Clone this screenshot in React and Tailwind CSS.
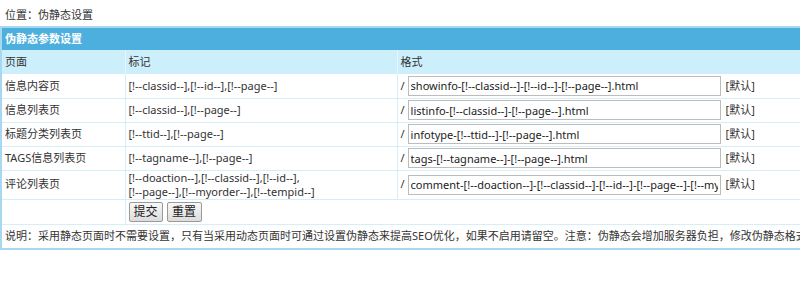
import React from "react";

const rows = [
  { page: "信息内容页", mark: "[!--classid--],[!--id--],[!--page--]", fmt: "showinfo-[!--classid--]-[!--id--]-[!--page--].html" },
  { page: "信息列表页", mark: "[!--classid--],[!--page--]", fmt: "listinfo-[!--classid--]-[!--page--].html" },
  { page: "标题分类列表页", mark: "[!--ttid--],[!--page--]", fmt: "infotype-[!--ttid--]-[!--page--].html" },
  { page: "TAGS信息列表页", mark: "[!--tagname--],[!--page--]", fmt: "tags-[!--tagname--]-[!--page--].html" },
];

function FmtCell({ value }) {
  return (
    <td className="border-b border-[#d6eef8] pl-[3px] pr-1">
      <div className="flex items-center">
        <span className="mr-[3px]">/</span>
        <input
          readOnly
          value={value}
          className="h-[20px] w-[313px] border border-[#bcbcbc] bg-white px-[2px] text-[11px] text-[#222] outline-none"
          style={{ fontFamily: "inherit" }}
        />
        <span className="ml-[5px] text-[#333]">[默认]</span>
      </div>
    </td>
  );
}

export default function App() {
  return (
    <div
      className="w-[800px] h-[281px] overflow-hidden bg-white text-[11px] text-[#333]"
      style={{ fontFamily: '"Noto Sans", "Noto Sans CJK SC", sans-serif' }}
    >
      <div className="h-[26px] pl-[5px] pt-[7px] leading-[16px] text-[#333]">位置：伪静态设置</div>
      <table className="w-[830px] border-collapse border-l-2 border-t-2 border-b-2 border-[#a8d8ef]">
        <tbody>
          <tr className="h-[23px] bg-[#4dafdd]">
            <td colSpan={3} className="pl-[3px] pt-[1px] font-bold text-white border-t border-[#7cc6e6]">伪静态参数设置</td>
          </tr>
          <tr className="h-[24px] bg-[#cdeffc]">
            <td className="w-[124px] pl-[3px] border-r border-[#e6f6fc]">页面</td>
            <td className="w-[272px] pl-[3px] border-r border-[#e6f6fc]">标记</td>
            <td className="pl-[3px]">格式</td>
          </tr>
          {rows.map((r) => (
            <tr key={r.page} className="h-[24px]">
              <td className="pl-[3px] border-b border-r border-[#d6eef8]">{r.page}</td>
              <td className="pl-[3px] border-b border-r border-[#d6eef8]">{r.mark}</td>
              <FmtCell value={r.fmt} />
            </tr>
          ))}
          <tr className="h-[29px]">
            <td className="pl-[3px] border-b border-r border-[#d6eef8]">评论列表页</td>
            <td className="pl-[3px] border-b border-r border-[#d6eef8] leading-[14px]">
              [!--doaction--],[!--classid--],[!--id--],
              <br />
              [!--page--],[!--myorder--],[!--tempid--]
            </td>
            <FmtCell value="comment-[!--doaction--]-[!--classid--]-[!--id--]-[!--page--]-[!--myorder--]-[!--tempid--].html" />
          </tr>
          <tr className="h-[25px]">
            <td className="border-b border-r border-[#d6eef8]"></td>
            <td className="pl-[3px] border-b border-r-0 border-[#d6eef8]">
              <div className="flex gap-[4px]">
                <button className="h-[20px] w-[34px] border border-[#9a9a9a] rounded-[2px] bg-gradient-to-b from-[#f8f8f8] to-[#dcdcdc] text-[12px] text-[#222] leading-none">提交</button>
                <button className="h-[20px] w-[35px] border border-[#9a9a9a] rounded-[2px] bg-gradient-to-b from-[#f8f8f8] to-[#dcdcdc] text-[12px] text-[#222] leading-none">重置</button>
              </div>
            </td>
            <td className="border-b border-[#d6eef8]"></td>
          </tr>
          <tr className="h-[25px]">
            <td colSpan={3} className="pl-[3px] whitespace-nowrap">
              说明：采用静态页面时不需要设置，只有当采用动态页面时可通过设置伪静态来提高SEO优化，如果不启用请留空。注意：伪静态会增加服务器负担，修改伪静态格式后你需要更新信息页面地址。
            </td>
          </tr>
        </tbody>
      </table>
    </div>
  );
}
